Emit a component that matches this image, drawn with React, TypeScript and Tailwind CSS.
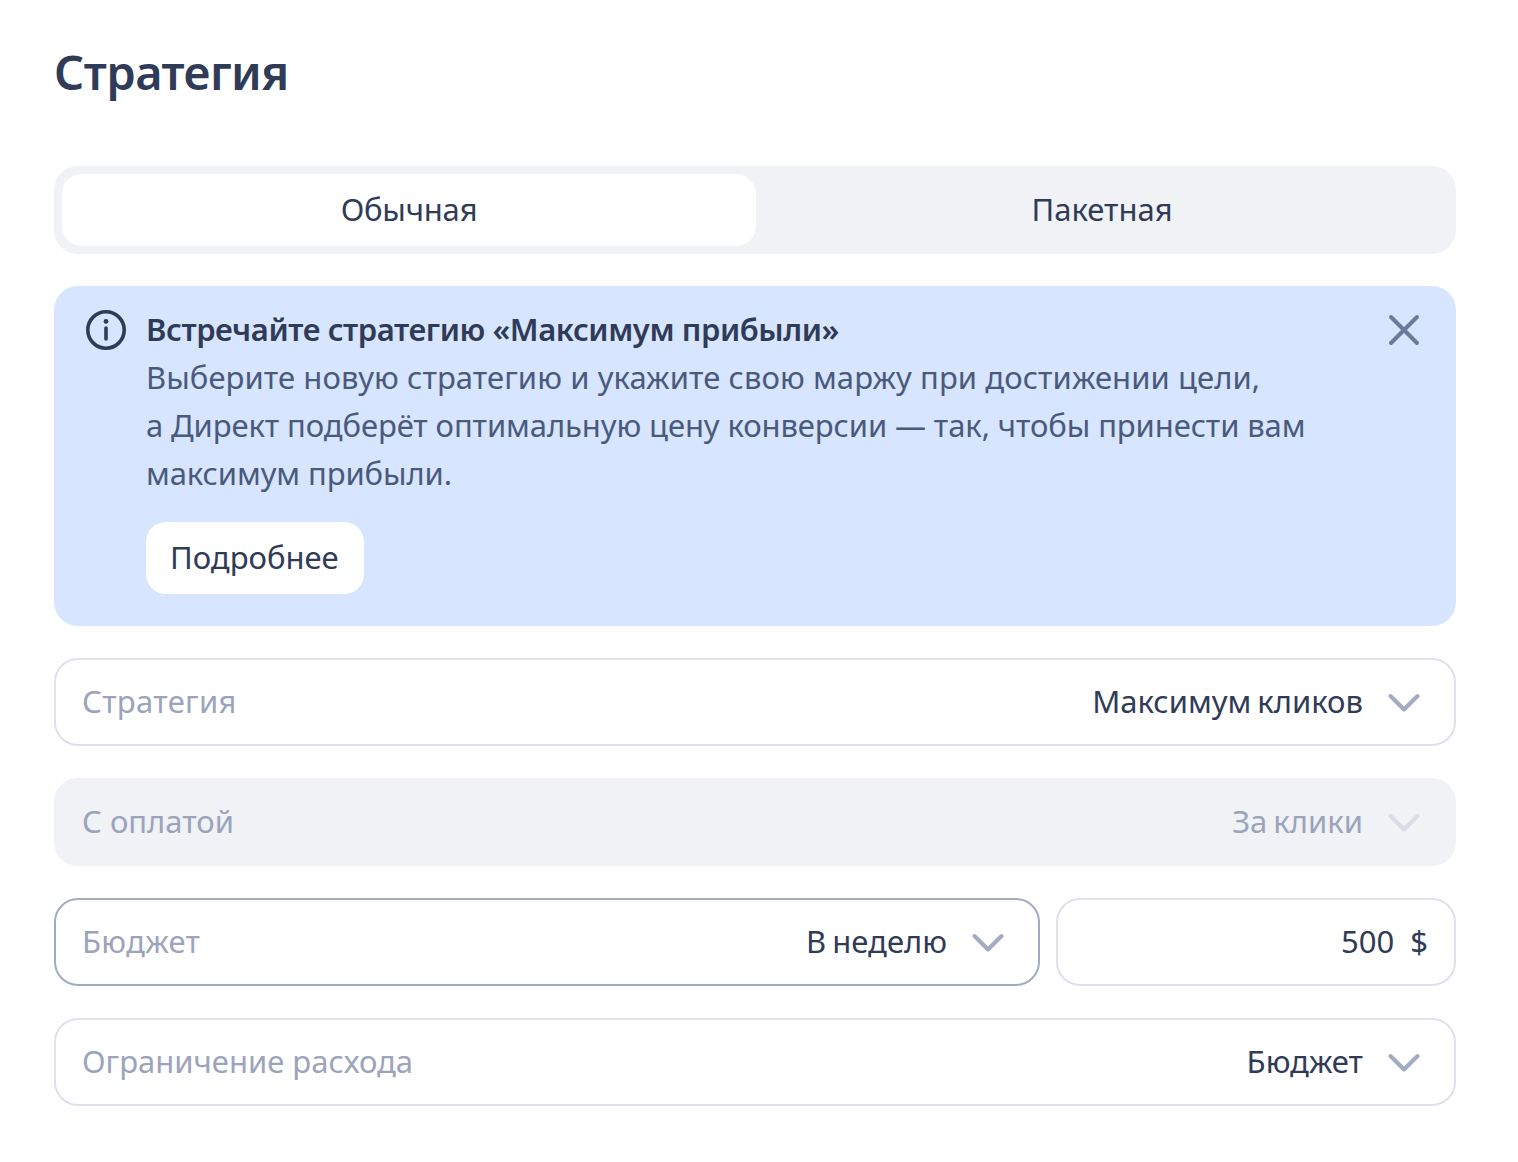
const font = { fontFamily: '"Noto Sans", sans-serif' };

function Chevron({ color = "#a3abc2" }: { color?: string }) {
  return (
    <svg width="32" height="32" viewBox="0 0 32 32" fill="none" className="shrink-0">
      <path d="M2.5 10 L16 23.5 L29.5 10" stroke={color} strokeWidth="4" strokeLinecap="round" strokeLinejoin="round" />
    </svg>
  );
}

function Field({ label, value, disabled, className = "", labelClass = "" }: { label: string; value: string; disabled?: boolean; className?: string; labelClass?: string }) {
  return (
    <div className={`flex h-[88px] items-center justify-between rounded-[24px] ${disabled ? "bg-[#f0f2f6] pl-[28px] pr-[36px]" : "border-2 border-[#dee1ec] bg-white pl-[26px] pr-[34px]"} ${className}`}>
      <span className={`pb-[2px] text-[#9ba4bc] ${labelClass}`}>{label}</span>
      <span className="flex items-center gap-[25px]">
        <span className={`pb-[2px] [word-spacing:-2px] ${disabled ? "text-[#9ba4bc]" : "text-[#2f3b57]"}`}>{value}</span>
        <Chevron color={disabled ? "#d9dde8" : "#a3abc2"} />
      </span>
    </div>
  );
}

export default function App() {
  return (
    <div className="min-h-[1162px] bg-white pl-[54px] pr-[62px] pt-[40px] text-[31px] leading-[48px] text-[#2f3b57]" style={font}>
      <h1 className="pb-[3px] text-[47px] font-semibold leading-[65px] tracking-[-0.5px] text-[#2f3b57]">Стратегия</h1>
      <div className="mt-[58px] flex h-[88px] rounded-[24px] bg-[#f0f2f6] p-[8px]">
        <div className="flex w-[694px] items-center justify-center rounded-[20px] bg-white pb-[2px] tracking-[-0.2px]">Обычная</div>
        <div className="flex flex-1 items-center justify-center pb-[2px]">Пакетная</div>
      </div>
      <div className="relative mt-[32px] flex h-[340px] gap-[20px] rounded-[24px] bg-[#d7e5fe] pl-[32px] pt-[19px]">
        <svg width="40" height="48" viewBox="0 0 40 48" fill="none" className="mt-[1px] shrink-0">
          <circle cx="20" cy="24" r="18.2" stroke="#2f3b57" strokeWidth="3.6" />
          <circle cx="20" cy="15.4" r="2.4" fill="#2f3b57" />
          <path d="M20 22v11" stroke="#2f3b57" strokeWidth="3.6" strokeLinecap="round" />
        </svg>
        <div>
          <div className="font-semibold tracking-[-0.43px] text-[#2f3b57]">Встречайте стратегию «Максимум прибыли»</div>
          <div className="text-[#4a5a7d]">
            <div className="tracking-[0.08px]">Выберите новую стратегию и укажите свою маржу при достижении цели,</div>
            <div className="tracking-[-0.1px]">а Директ подберёт оптимальную цену конверсии — так, чтобы принести вам</div>
            <div className="tracking-[-0.1px]">максимум прибыли.</div>
          </div>
          <div className="mt-[25px] inline-flex h-[72px] items-center rounded-[20px] bg-white pb-[2px] pl-[24px] pr-[25px] text-[#2f3b57]">Подробнее</div>
        </div>
        <svg width="32" height="32" viewBox="0 0 32 32" fill="none" className="absolute right-[36px] top-[28px]">
          <path d="M3 3 L29 29 M29 3 L3 29" stroke="#6b7a9a" strokeWidth="4" strokeLinecap="round" />
        </svg>
      </div>
      <div className="mt-[32px] flex flex-col gap-[32px]">
        <Field label="Стратегия" value="Максимум кликов" labelClass="tracking-[0.3px]" />
        <Field label="С оплатой" value="За клики" disabled />
        <div className="flex gap-[16px]">
          <Field label="Бюджет" value="В неделю" className="flex-1 border-[#a3abc2]!" labelClass="tracking-[0.3px]" />
          <div className="flex h-[88px] w-[400px] items-center justify-end gap-[16px] rounded-[24px] border-2 border-[#dee1ec] bg-white pb-[2px] pr-[26px]">
            <span>500</span>
            <span>$</span>
          </div>
        </div>
        <Field label="Ограничение расхода" value="Бюджет" />
      </div>
    </div>
  );
}
